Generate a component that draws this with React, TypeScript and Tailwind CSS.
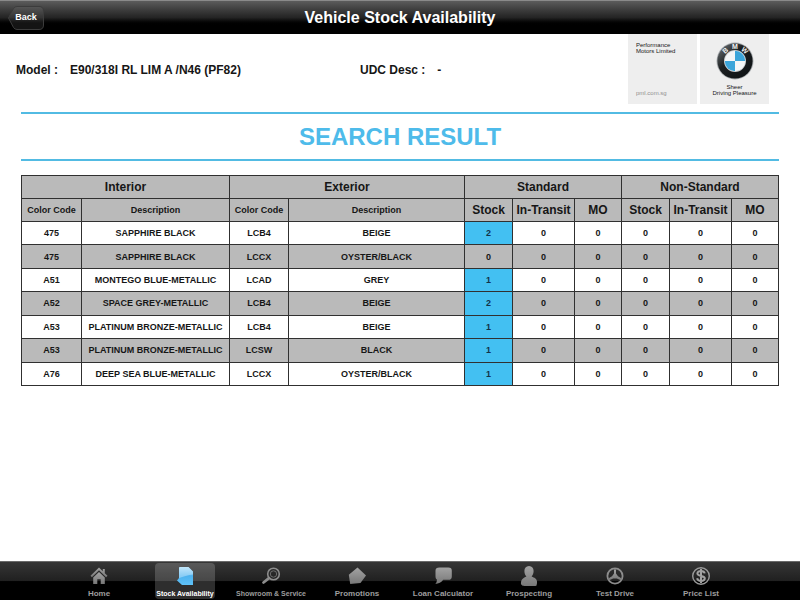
import type { ReactNode } from "react";

type StockRow = {
  interior: [string, string];
  exterior: [string, string];
  standard: [number, number, number];
  nonStandard: [number, number, number];
};

const rows: StockRow[] = [
  { interior: ["475", "SAPPHIRE BLACK"], exterior: ["LCB4", "BEIGE"], standard: [2, 0, 0], nonStandard: [0, 0, 0] },
  { interior: ["475", "SAPPHIRE BLACK"], exterior: ["LCCX", "OYSTER/BLACK"], standard: [0, 0, 0], nonStandard: [0, 0, 0] },
  { interior: ["A51", "MONTEGO BLUE-METALLIC"], exterior: ["LCAD", "GREY"], standard: [1, 0, 0], nonStandard: [0, 0, 0] },
  { interior: ["A52", "SPACE GREY-METALLIC"], exterior: ["LCB4", "BEIGE"], standard: [2, 0, 0], nonStandard: [0, 0, 0] },
  { interior: ["A53", "PLATINUM BRONZE-METALLIC"], exterior: ["LCB4", "BEIGE"], standard: [1, 0, 0], nonStandard: [0, 0, 0] },
  { interior: ["A53", "PLATINUM BRONZE-METALLIC"], exterior: ["LCSW", "BLACK"], standard: [1, 0, 0], nonStandard: [0, 0, 0] },
  { interior: ["A76", "DEEP SEA BLUE-METALLIC"], exterior: ["LCCX", "OYSTER/BLACK"], standard: [1, 0, 0], nonStandard: [0, 0, 0] },
];

const columnWidths = [
  "w-[60px]",
  "w-[148px]",
  "w-[59px]",
  "w-[176px]",
  "w-[48px]",
  "w-[62px]",
  "w-[47px]",
  "w-[48px]",
  "w-[62px]",
  "w-[47px]",
];

function Icon({ children }: { children: ReactNode }) {
  return (
    <svg viewBox="0 0 20 20" className="h-5 w-5" fill="url(#tab-grey)" aria-hidden="true">
      {children}
    </svg>
  );
}

const tabs: { label: string; small?: boolean; icon: ReactNode }[] = [
  {
    label: "Home",
    icon: (
      <Icon>
        <path d="M10 1.500 1.500 9.800l1.400 1.400L10 4.300l7.100 6.900 1.400-1.400-2.700-2.600V3h-2v2.200z" />
        <path d="M10 6 4.200 11.600V18h4.100v-4.800h3.400V18h4.100v-6.400z" />
      </Icon>
    ),
  },
  {
    label: "Stock Availability",
    small: true,
    icon: (
      <svg viewBox="0 0 20 20" className="h-5 w-5" aria-hidden="true">
        <path d="M5 1h8.500L18 5.500V19H7l-5-4.500L4 12V2q0-1 1-1z" fill="url(#tab-blue)" />
        <path d="M5 1h8.500L18 5.500V8.500C13 9 8 10.500 4 12V2q0-1 1-1z" fill="#e6f6ff" fillOpacity=".4" />
      </svg>
    ),
  },
  {
    label: "Showroom & Service",
    small: true,
    icon: (
      <Icon>
        <g fill="none" stroke="#8d8d8d">
          <circle cx="12.500" cy="8" r="5.800" strokeWidth="1.600" />
          <circle cx="12.500" cy="8" r="3.200" stroke="#6c6c6c" />
          <path d="m8 12.200-5.500 4.300" strokeWidth="2.800" strokeLinecap="round" />
        </g>
      </Icon>
    ),
  },
  {
    label: "Promotions",
    icon: (
      <Icon>
        <path d="M10.500 1.500 19 9.500 13.500 17l-10.300 1L1.800 8.800z" />
      </Icon>
    ),
  },
  {
    label: "Loan Calculator",
    icon: (
      <Icon>
        <path d="M6.500 1.500h8.700c2.700 0 3.600 1 3.600 3.300v5.600c0 2.400-1 3.400-3.600 3.400h-5c-1.700 2.500-4.500 3.900-7.900 4.300 1.300-1.400 1.800-3 1.500-4.800-.9-.4-1.300-1.300-1.300-3.300V4.800c0-2.300 1.200-3.300 4-3.300z" />
      </Icon>
    ),
  },
  {
    label: "Prospecting",
    icon: (
      <Icon>
        <path d="M10 0c3 0 4.600 2.200 4.600 5 0 2.400-1 4.300-2 5.300.8 1.300 5.200 1.200 5.400 5.200.1 2-.2 3.500-.6 4.200-5 .8-9 .7-13.800.1L2 18.300C1.400 12 6.600 11.600 7.400 10.300 6.200 9.300 5.400 7.400 5.400 5 5.400 2.200 7 0 10 0z" />
      </Icon>
    ),
  },
  {
    label: "Test Drive",
    icon: (
      <Icon>
        <circle cx="10" cy="10" r="7.600" fill="none" stroke="#8d8d8d" strokeWidth="1.800" />
        <path d="M9 3.500h2v4l2 2.800 3.800 2.200-1 1.800-4-1.800H8.200l-4 1.800-1-1.800L7 10.300l2-2.800z" />
      </Icon>
    ),
  },
  {
    label: "Price List",
    icon: (
      <Icon>
        <circle cx="10" cy="10" r="8.300" fill="none" stroke="#9a9a9a" strokeWidth="1.400" />
        <path
          d="M13.700 7.400C13.300 5.600 11.900 5 10 5 7.900 5 6.400 5.900 6.400 7.500c0 3.200 7.400 1.600 7.400 4.800 0 1.700-1.600 2.700-3.800 2.700-2.100 0-3.500-.8-3.900-2.700M10 2.900v14.200"
          fill="none"
          stroke="#a2a2a2"
          strokeWidth="2"
        />
      </Icon>
    ),
  },
];

function Roundel() {
  return (
    <svg viewBox="0 0 38 38" className="h-[38px] w-[38px]" role="img" aria-label="BMW">
      <circle cx="19" cy="19" r="18.500" fill="#a9adb0" />
      <circle cx="19" cy="19" r="17.600" fill="url(#ring)" />
      <circle cx="19" cy="19" r="11" fill="#c9cdd0" />
      <circle cx="19" cy="19" r="10.200" fill="#f4f6f7" />
      <path d="M19 19V8.800A10.200 10.200 0 0 1 29.200 19z" fill="#3ba5da" />
      <path d="M19 19v10.200A10.200 10.200 0 0 1 8.800 19z" fill="#3ba5da" />
      <g fill="#f2f2f2" fontSize="7" fontWeight="700" textAnchor="middle">
        <text transform="translate(10.800 10.200) rotate(-42)">B</text>
        <text x="19" y="7">M</text>
        <text transform="translate(27.200 10.200) rotate(42)">W</text>
      </g>
    </svg>
  );
}

function Gradients() {
  return (
    <svg className="absolute h-0 w-0" aria-hidden="true">
      <defs>
        <linearGradient id="tab-grey" x1="0" y1="0" x2="0" y2="1">
          <stop offset="0" stopColor="#a3a3a3" />
          <stop offset="1" stopColor="#777777" />
        </linearGradient>
        <linearGradient id="tab-blue" x1="0" y1="0" x2="0" y2="1">
          <stop offset="0" stopColor="#a9dcf8" />
          <stop offset=".5" stopColor="#4eb2ee" />
          <stop offset="1" stopColor="#5fc2f8" />
        </linearGradient>
        <linearGradient id="ring" x1="0" y1="0" x2="1" y2="1">
          <stop offset="0" stopColor="#777b7e" />
          <stop offset=".4" stopColor="#1c2022" />
          <stop offset="1" stopColor="#0c1012" />
        </linearGradient>
      </defs>
    </svg>
  );
}

export default function App() {
  return (
    <div className="flex min-h-screen flex-col bg-white font-['Liberation_Sans',Arial,sans-serif] font-bold text-[#161616]">
      <Gradients />
      <header className="grid h-[34px] grid-cols-[1fr_auto_1fr] items-center border-t border-[#8a8a8a] bg-linear-to-b from-[#5c5c5c] via-[#242424] via-50% to-black to-75%">
        <button type="button" className="ml-2 h-6 w-9 justify-self-start text-[9px] text-white">
          <span className="relative flex h-full items-center justify-center">
            <svg viewBox="0 0 36 24" className="absolute inset-0 h-full w-full" aria-hidden="true">
              <path d="M9 .5h22q4.500 0 4.500 4.500v14q0 4.500-4.500 4.500H9q-2 0-3.500-2L.5 12l5-9.500Q7 .5 9 .5z" fill="#fff" fillOpacity=".08" stroke="#3c3c3c" />
            </svg>
            <span className="relative">Back</span>
          </span>
        </button>
        <h1 className="text-[16px] leading-5 text-white">Vehicle Stock Availability</h1>
      </header>

      <main className="px-[21px]">
        <div className="flex h-[78px] items-start">
          <dl className="-ml-[5px] flex flex-1 pt-7 text-[12px] leading-4">
            <div className="flex flex-1 gap-3">
              <dt>Model :</dt>
              <dd>E90/318I RL LIM A /N46 (PF82)</dd>
            </div>
            <div className="flex w-[268px] gap-3">
              <dt>UDC Desc :</dt>
              <dd>-</dd>
            </div>
          </dl>
          <div className="mr-[10px] flex gap-[3px] text-[6px] leading-[6px] font-normal">
            <div className="flex h-[70px] w-[69px] flex-col justify-between bg-[#eeeeee] px-2 py-2">
              <p>
                Performance
                <br />
                Motors Limited
              </p>
              <p className="text-[#8e8e8e]">pml.com.sg</p>
            </div>
            <div className="flex h-[70px] w-[69px] flex-col items-center bg-[#eeeeee] pt-2 text-center">
              <Roundel />
              <p className="pt-1 whitespace-nowrap">
                Sheer
                <br />
                Driving Pleasure
              </p>
            </div>
          </div>
        </div>

        <h2 className="border-y-2 border-[#52bbe3] text-center text-[24px] leading-[45px] text-[#4ebbea]">
          SEARCH RESULT
        </h2>

        <table className="mt-[14px] h-[211px] w-full table-fixed border-collapse text-center text-[9px] leading-3 [&_td]:border [&_td]:border-[#303030] [&_td]:p-0 [&_th]:border [&_th]:border-[#303030] [&_th]:p-0">
          <colgroup>
            {columnWidths.map((width, i) => (
              <col key={i} className={width} />
            ))}
          </colgroup>
          <thead className="bg-[#bababa]">
            <tr className="h-[23px] text-[12px]">
              <th colSpan={2}>Interior</th>
              <th colSpan={2}>Exterior</th>
              <th colSpan={3}>Standard</th>
              <th colSpan={3}>Non-Standard</th>
            </tr>
            <tr className="h-[23px]">
              {["Color Code", "Description", "Color Code", "Description"].map((label, i) => (
                <th key={i}>{label}</th>
              ))}
              {["Stock", "In-Transit", "MO", "Stock", "In-Transit", "MO"].map((label, i) => (
                <th key={i} className="text-[12px] whitespace-nowrap">
                  {label}
                </th>
              ))}
            </tr>
          </thead>
          <tbody>
            {rows.map((row, i) => (
              <tr key={i} className="even:bg-[#bababa]">
                {[...row.interior, ...row.exterior, ...row.standard, ...row.nonStandard].map((value, c) => (
                  <td
                    key={c}
                    className={c === 4 && row.standard[0] > 0 ? "bg-[#43c0f2] text-[#12324a]" : "whitespace-nowrap"}
                  >
                    {value}
                  </td>
                ))}
              </tr>
            ))}
          </tbody>
        </table>
      </main>

      <nav className="mt-auto border-t border-[#6a6a6a] bg-linear-to-b from-[#363636] from-0% via-[#202020] via-50% to-black to-52% px-14">
        <ul className="grid h-[38px] grid-cols-8">
          {tabs.map((tab, i) => (
            <li key={tab.label} className="flex justify-center">
              <a
                href="#"
                aria-current={i === 1 ? "page" : undefined}
                className={
                  "my-px flex w-[60px] flex-col items-center justify-between rounded-sm pt-[3px] leading-[10px] whitespace-nowrap " +
                  (i === 1 ? "bg-white/18 text-white " : "text-[#9d9d9d] ") +
                  (tab.small ? "text-[7px]" : "text-[8px]")
                }
              >
                {tab.icon}
                <span>{tab.label}</span>
              </a>
            </li>
          ))}
        </ul>
      </nav>
    </div>
  );
}
